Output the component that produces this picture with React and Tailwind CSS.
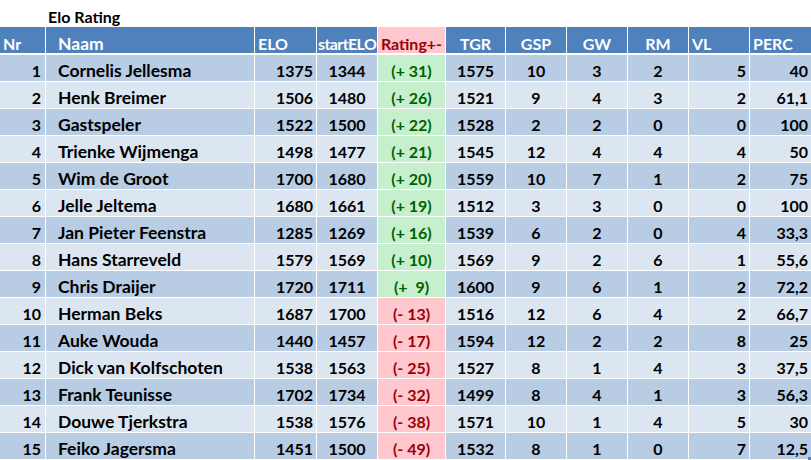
import React from 'react';

const rows = [
  [1, 'Cornelis Jellesma', 1375, 1344, '(+ 31)', 1575, 10, 3, 2, 5, '40'],
  [2, 'Henk Breimer', 1506, 1480, '(+ 26)', 1521, 9, 4, 3, 2, '61,1'],
  [3, 'Gastspeler', 1522, 1500, '(+ 22)', 1528, 2, 2, 0, 0, '100'],
  [4, 'Trienke Wijmenga', 1498, 1477, '(+ 21)', 1545, 12, 4, 4, 4, '50'],
  [5, 'Wim de Groot', 1700, 1680, '(+ 20)', 1559, 10, 7, 1, 2, '75'],
  [6, 'Jelle Jeltema', 1680, 1661, '(+ 19)', 1512, 3, 3, 0, 0, '100'],
  [7, 'Jan Pieter Feenstra', 1285, 1269, '(+ 16)', 1539, 6, 2, 0, 4, '33,3'],
  [8, 'Hans Starreveld', 1579, 1569, '(+ 10)', 1569, 9, 2, 6, 1, '55,6'],
  [9, 'Chris Draijer', 1720, 1711, '(+  9)', 1600, 9, 6, 1, 2, '72,2'],
  [10, 'Herman Beks', 1687, 1700, '(- 13)', 1516, 12, 6, 4, 2, '66,7'],
  [11, 'Auke Wouda', 1440, 1457, '(- 17)', 1594, 12, 2, 2, 8, '25'],
  [12, 'Dick van Kolfschoten', 1538, 1563, '(- 25)', 1527, 8, 1, 4, 3, '37,5'],
  [13, 'Frank Teunisse', 1702, 1734, '(- 32)', 1499, 8, 4, 1, 3, '56,3'],
  [14, 'Douwe Tjerkstra', 1538, 1576, '(- 38)', 1571, 10, 1, 4, 5, '30'],
  [15, 'Feiko Jagersma', 1451, 1500, '(- 49)', 1532, 8, 1, 0, 7, '12,5'],
];

const cols = 'grid grid-cols-[45px_208px_61px_60px_67px_59px_60px_60px_60px_60px_61px] gap-x-px';

function Header() {
  const h = 'bg-[#4f81bd] text-white flex items-end pb-[1px] h-[26px] leading-none';
  return (
    <div className={cols}>
      <div className={`${h} pl-[3px]`}>Nr</div>
      <div className={`${h} pl-[12px] text-[17.5px]`}>Naam</div>
      <div className={`${h} pl-[3px]`}>ELO</div>
      <div className={`${h} pl-[1px] tracking-[-0.6px] whitespace-nowrap overflow-hidden`}>startELO</div>
      <div className="bg-[#ffc7ce] text-[#9c0006] flex items-end justify-center pb-[1px] h-[26px] leading-none">Rating+-</div>
      <div className={`${h} justify-center`}>TGR</div>
      <div className={`${h} justify-center`}>GSP</div>
      <div className={`${h} justify-center`}>GW</div>
      <div className={`${h} justify-center`}>RM</div>
      <div className={`${h} pl-[3px]`}>VL</div>
      <div className={`${h} pl-[3px]`}>PERC</div>
    </div>
  );
}

function Row({ r, i }) {
  const bg = i % 2 === 0 ? 'bg-[#b8cce4]' : 'bg-[#dce6f1]';
  const c = `${bg} flex items-end pb-[2px] h-[26px] leading-none`;
  const up = r[4].startsWith('(+');
  return (
    <div className={cols}>
      <div className={`${c} justify-end pr-[4px]`}>{r[0]}</div>
      <div className={`${c} pl-[12px] text-[17.5px]`}>{r[1]}</div>
      <div className={`${c} justify-end pr-[3px]`}>{r[2]}</div>
      <div className={`${c} justify-center`}>{r[3]}</div>
      <div className={`${up ? 'bg-[#c6efce] text-[#006100]' : 'bg-[#ffc7ce] text-[#9c0006]'} flex items-end justify-center pb-[2px] h-[26px] leading-none whitespace-pre`}>{r[4]}</div>
      <div className={`${c} justify-center`}>{r[5]}</div>
      <div className={`${c} justify-center`}>{r[6]}</div>
      <div className={`${c} justify-center`}>{r[7]}</div>
      <div className={`${c} justify-center`}>{r[8]}</div>
      <div className={`${c} justify-end pr-[3px]`}>{r[9]}</div>
      <div className={`${c} justify-end pr-[3px]`}>{r[10]}</div>
    </div>
  );
}

export default function App() {
  return (
    <div className="relative w-[811px] h-[460px] overflow-hidden bg-white text-black font-bold text-[16px] font-['Lato',sans-serif]">
      <div className="h-[27px] pl-[48px] flex items-end pb-[2px] leading-none">Elo Rating</div>
      <Header />
      <div className="flex flex-col gap-y-px mt-[2px]">
        {rows.map((r, i) => (
          <Row key={r[0]} r={r} i={i} />
        ))}
      </div>
      <div className="absolute right-0 bottom-0 w-[3px] h-[3px] bg-[#4f81bd]" />
    </div>
  );
}
